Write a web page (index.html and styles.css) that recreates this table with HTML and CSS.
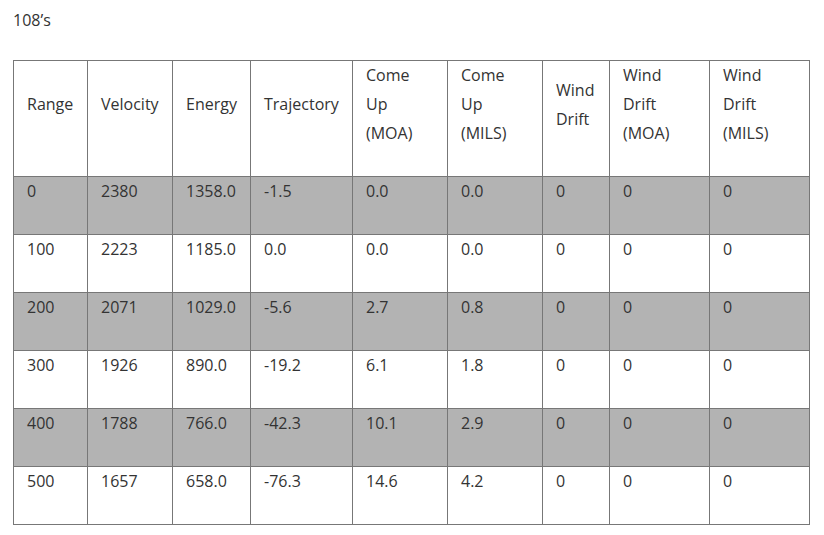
FILE: index.html
```html
<!DOCTYPE html>
<html>
<head>
<meta charset="utf-8">
<link rel="stylesheet" href="styles.css">
</head>
<body>
<p class="title">108’s</p>
<table class="ballistics">
  <colgroup>
    <col class="c1"><col class="c2"><col class="c3"><col class="c4"><col class="c5"><col class="c6"><col class="c7"><col class="c8"><col class="c9">
  </colgroup>
  <thead>
    <tr>
      <th>Range</th>
      <th>Velocity</th>
      <th>Energy</th>
      <th>Trajectory</th>
      <th>Come<br>Up<br>(MOA)</th>
      <th>Come<br>Up<br>(MILS)</th>
      <th>Wind<br>Drift</th>
      <th>Wind<br>Drift<br>(MOA)</th>
      <th>Wind<br>Drift<br>(MILS)</th>
    </tr>
  </thead>
  <tbody>
    <tr class="shade"><td>0</td><td>2380</td><td>1358.0</td><td>-1.5</td><td>0.0</td><td>0.0</td><td>0</td><td>0</td><td>0</td></tr>
    <tr><td>100</td><td>2223</td><td>1185.0</td><td>0.0</td><td>0.0</td><td>0.0</td><td>0</td><td>0</td><td>0</td></tr>
    <tr class="shade"><td>200</td><td>2071</td><td>1029.0</td><td>-5.6</td><td>2.7</td><td>0.8</td><td>0</td><td>0</td><td>0</td></tr>
    <tr><td>300</td><td>1926</td><td>890.0</td><td>-19.2</td><td>6.1</td><td>1.8</td><td>0</td><td>0</td><td>0</td></tr>
    <tr class="shade"><td>400</td><td>1788</td><td>766.0</td><td>-42.3</td><td>10.1</td><td>2.9</td><td>0</td><td>0</td><td>0</td></tr>
    <tr><td>500</td><td>1657</td><td>658.0</td><td>-76.3</td><td>14.6</td><td>4.2</td><td>0</td><td>0</td><td>0</td></tr>
  </tbody>
</table>
</body>
</html>
```
FILE: styles.css
```css
html, body {
  margin: 0;
  padding: 0;
  background: #fff;
}
body {
  padding: 8px 13px;
  font-family: "Open Sans", "Noto Sans", sans-serif;
  font-size: 16px;
  color: #333;
}
.title {
  margin: 0;
  line-height: 24px;
}
.ballistics {
  margin-top: 28px;
  border-collapse: collapse;
  table-layout: fixed;
  width: 797px;
}
.c1 { width: 74px; }
.c2 { width: 85px; }
.c3 { width: 78px; }
.c4 { width: 102px; }
.c5 { width: 95px; }
.c6 { width: 95px; }
.c7 { width: 67px; }
.c8 { width: 100px; }
.c9 { width: 100px; }
.ballistics th,
.ballistics td {
  border: 1px solid #777;
  padding: 0 13px 28px;
  line-height: 29px;
  text-align: left;
  font-weight: normal;
  vertical-align: middle;
  white-space: nowrap;
}
.ballistics th {
  padding-top: 0;
}
.ballistics td {
  vertical-align: top;
}
.shade td {
  background: repeating-conic-gradient(#9c9c9c 0 25%, #cacaca 0 50%) 0 0 / 2px 2px;
}
```
